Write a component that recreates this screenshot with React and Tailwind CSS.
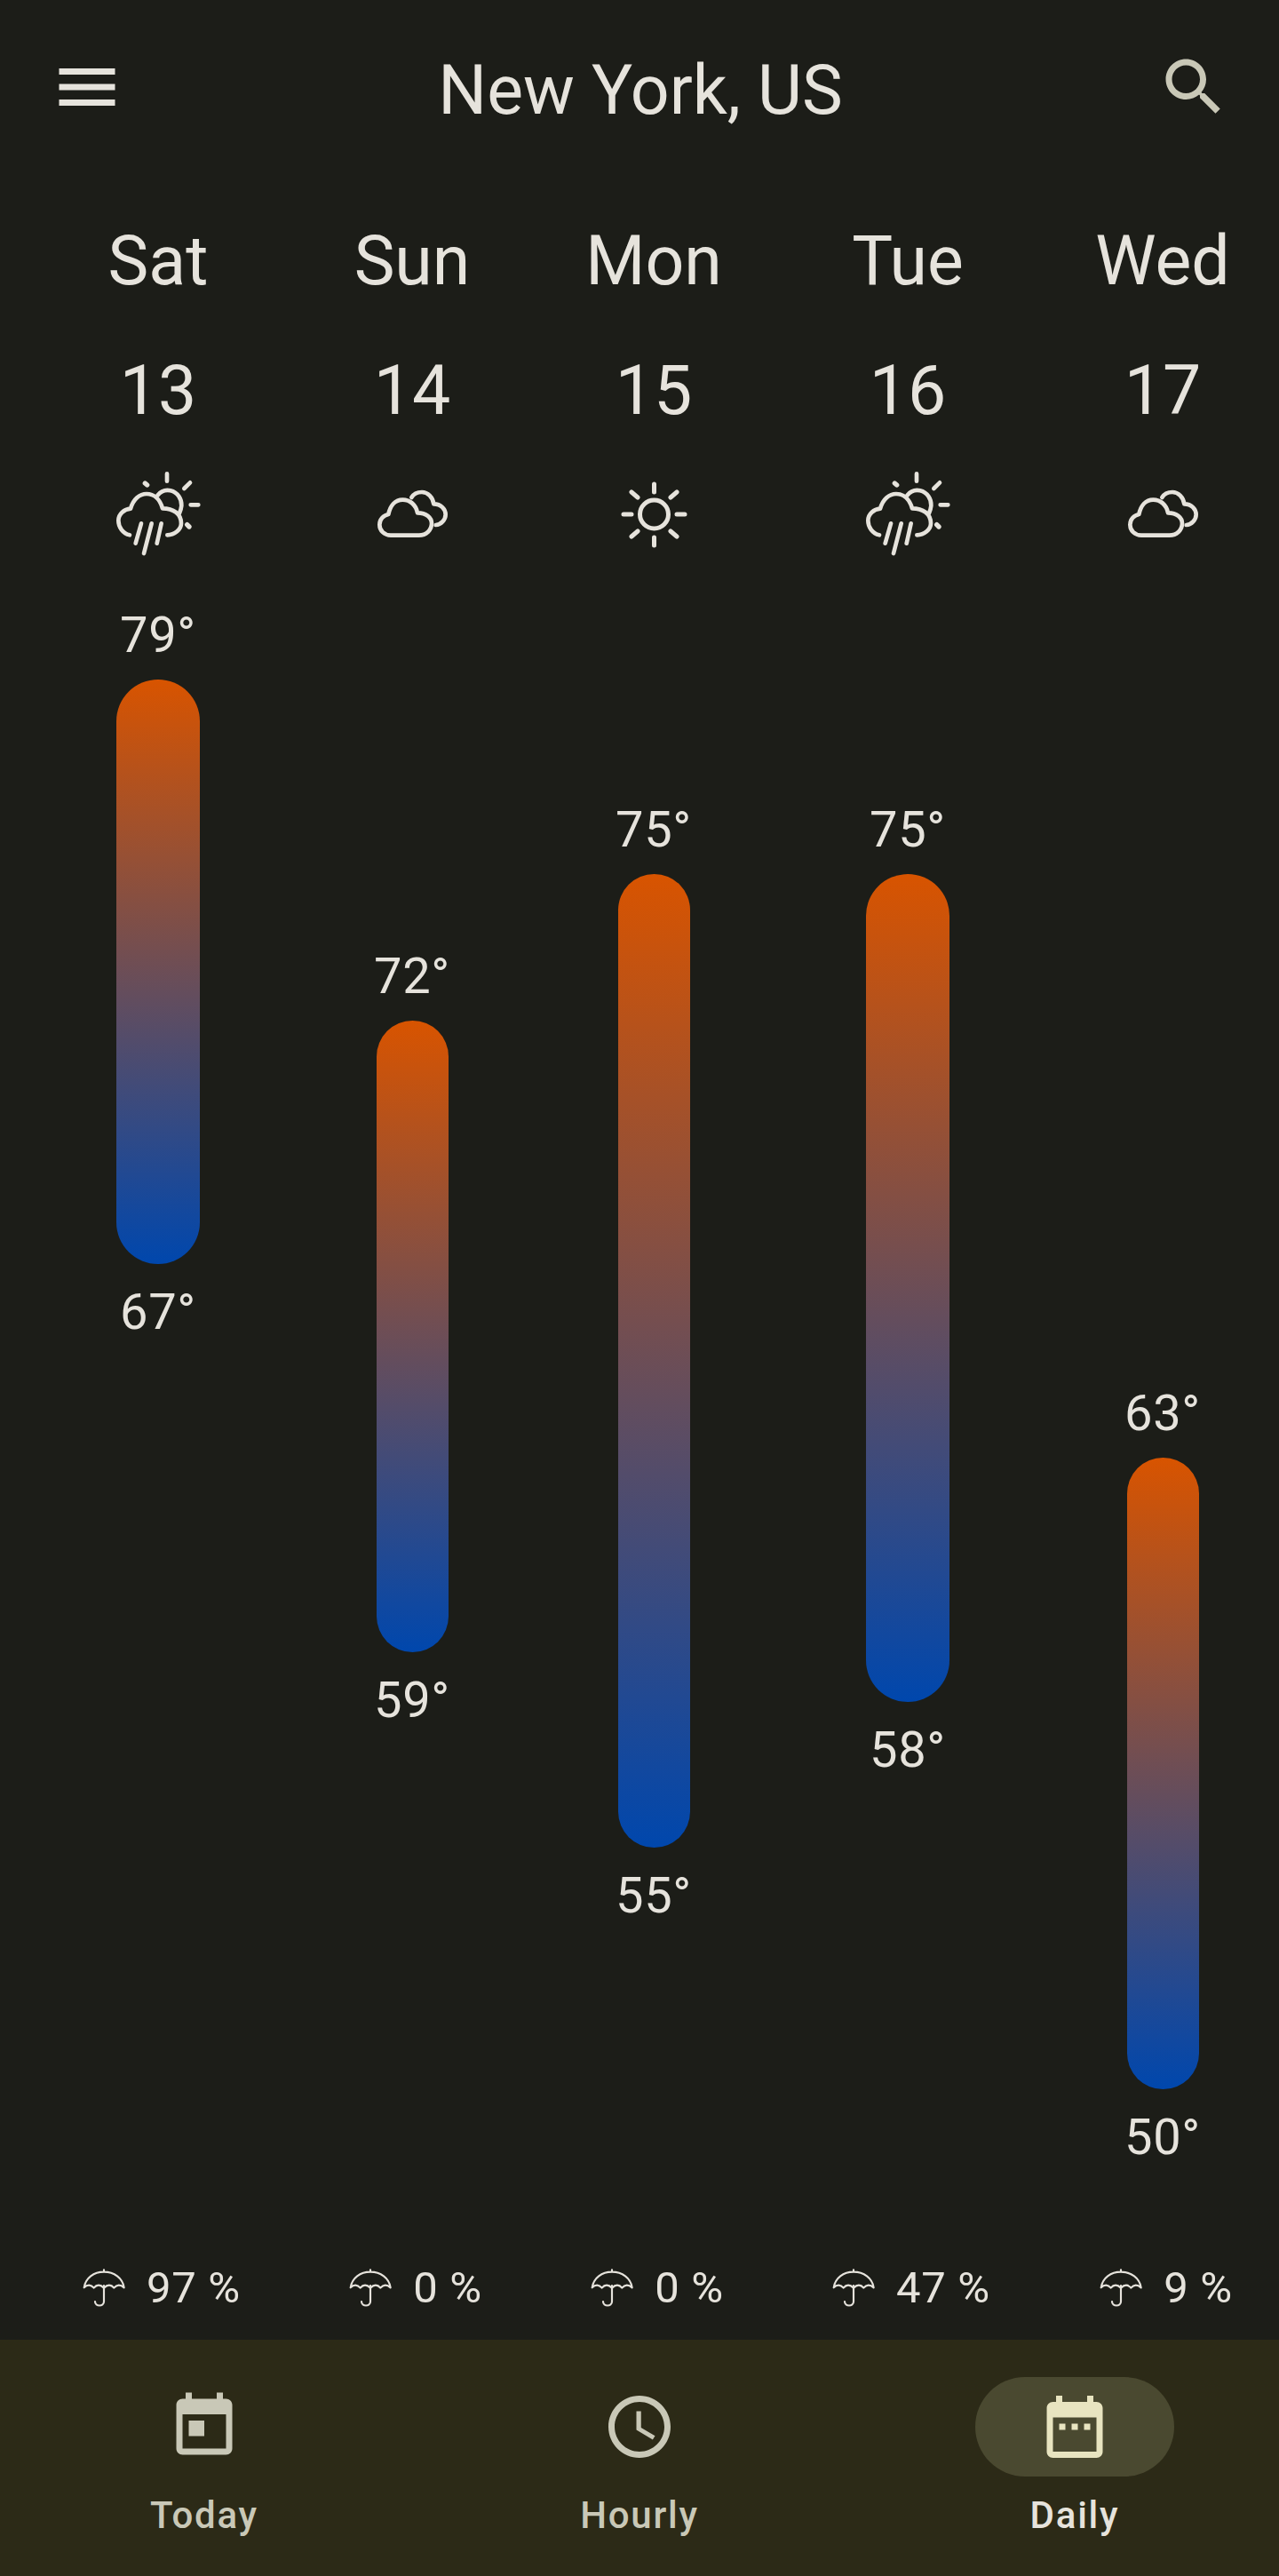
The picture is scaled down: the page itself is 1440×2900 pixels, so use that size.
const R = { fontFamily: "Roboto, sans-serif" };

function IconPath({ d, className }) {
  return (
    <svg viewBox="0 0 24 24" className={className} fill="currentColor">
      <path d={d} />
    </svg>
  );
}

const MENU = "M3 18h18v-2H3v2zm0-5h18v-2H3v2zm0-7v2h18V6H3z";
const SEARCH = "M15.5 14h-.79l-.28-.27C15.41 12.59 16 11.11 16 9.5 16 5.91 13.09 3 9.5 3S3 5.91 3 9.5 5.91 16 9.5 16c1.61 0 3.09-.59 4.23-1.57l.27.28v.79l5 4.99L20.49 19l-4.99-5zm-6 0C7.01 14 5 11.99 5 9.5S7.01 5 9.5 5 14 7.01 14 9.5 11.99 14 9.5 14z";
const TODAY = "M19 3h-1V1h-2v2H8V1H6v2H5c-1.11 0-1.99.9-1.99 2L3 19c0 1.1.89 2 2 2h14c1.1 0 2-.9 2-2V5c0-1.1-.9-2-2-2zm0 16H5V8h14v11zM7 10h5v5H7z";
const CLOCK = "M11.99 2C6.47 2 2 6.48 2 12s4.47 10 9.99 10C17.52 22 22 17.52 22 12S17.52 2 11.99 2zM12 20c-4.42 0-8-3.58-8-8s3.58-8 8-8 8 3.58 8 8-3.58 8-8 8zm.5-13H11v6l5.25 3.15.75-1.23-4.5-2.67z";
const DATE = "M9 11H7v2h2v-2zm4 0h-2v2h2v-2zm4 0h-2v2h2v-2zm2-7h-1V2h-2v2H8V2H6v2H5c-1.11 0-1.99.9-1.99 2L3 20c0 1.1.89 2 2 2h14c1.1 0 2-.9 2-2V6c0-1.1-.9-2-2-2zm0 16H5V9h14v11z";

function RainSun() {
  return (
    <svg viewBox="-6 0 480 390" className="w-[160px] h-[130px]" fill="none" stroke="#e6e3dc" strokeWidth="14" strokeLinecap="round" strokeLinejoin="round">
      <path d="M264 70V95M322 120L342 100M344 175H370" />
      <path d="M190 102L197 108M332 242L339 249" strokeWidth="16" />
      <path d="M232 143C245 127 262 124 276 127C300 133 314 155 313 178C312 188 310 195 306 203" />
      <path d="M138 277C115 272 100 250 100 228C100 205 120 190 141 188C150 155 172 138 195 138C220 138 240 155 249 187C285 187 312 205 312 238C312 258 290 277 265 277" />
      <path d="M177 238L158 305M212 238L186 339M245 238L230 305" />
    </svg>
  );
}

function Clouds() {
  return (
    <svg viewBox="-48 -60 480 390" className="w-[160px] h-[130px]" fill="none" stroke="#e6e3dc" strokeWidth="14" strokeLinecap="round" strokeLinejoin="round">
      <path d="M190 90C197 78 212 72 225 72C245 72 262 90 265 112C290 112 305 130 305 148C305 165 290 182 272 183" />
      <path d="M120 218H215C240 218 258 200 258 178C258 158 240 142 210 142C205 115 185 98 160 98C135 98 118 118 112 147C95 150 82 165 82 182C82 202 98 218 120 218Z" />
    </svg>
  );
}

function Sun() {
  return (
    <svg viewBox="0 0 160 130" className="w-[160px] h-[130px]" fill="none" stroke="#e6e3dc" strokeWidth="5" strokeLinecap="round">
      <circle cx="80.5" cy="69" r="16" />
      <path d="M80.5 35V44M80.5 95V104M106 69H115M55 69H46M99 50L106 44M99 88L106 94M62 50L55 44M62 88L55 94" />
    </svg>
  );
}

function Umbrella() {
  return (
    <svg viewBox="0 0 168 150" className="w-[56px] h-[50px] shrink-0" fill="none" stroke="#e6e3dc" strokeWidth="6.5" strokeLinecap="round" strokeLinejoin="round">
      <path d="M84 13V20M17 73C22 40 50 20 84 20C118 20 147 40 152 73C140 62 128 62 118 74C108 62 96 62 84 74C72 62 60 62 50 74C40 62 28 62 17 73Z" />
      <path d="M84 66V120C84 138 54 138 54 120" />
    </svg>
  );
}

const days = [
  { d: "Sat", n: "13", Icon: RainSun, hi: "79°", lo: "67°", rain: "97 %", bar: "w-[94px] h-[658px]", top: "mt-[0px]", col: "ml-[78px]" },
  { d: "Sun", n: "14", Icon: Clouds, hi: "72°", lo: "59°", rain: "0 %", bar: "w-[81px] h-[711px]", top: "mt-[384px]", col: "ml-[86px]" },
  { d: "Mon", n: "15", Icon: Sun, hi: "75°", lo: "55°", rain: "0 %", bar: "w-[81px] h-[1096px]", top: "mt-[219px]", col: "ml-[72px]" },
  { d: "Tue", n: "16", Icon: RainSun, hi: "75°", lo: "58°", rain: "47 %", bar: "w-[94px] h-[932px]", top: "mt-[219px]", col: "ml-[86px]" },
  { d: "Wed", n: "17", Icon: Clouds, hi: "63°", lo: "50°", rain: "9 %", bar: "w-[81px] h-[711px]", top: "mt-[876px]", col: "ml-[87px]" },
];

export default function App() {
  return (
    <div style={R} className="w-[1440px] h-[2900px] bg-[#1c1d18] flex flex-col text-[#e6e3dc] overflow-hidden">
      <header className="h-[196px] flex items-center justify-between pl-[56px] pr-[54px] shrink-0">
        <IconPath d={MENU} className="w-[84px] h-[84px]" />
        <h1 className="text-[77px] leading-[100px] font-normal mt-[8px]">New York, US</h1>
        <IconPath d={SEARCH} className="w-[84px] h-[84px] text-[#c9c8b7]" />
      </header>

      <main className="flex flex-1 items-start">
        {days.map((x) => (
          <div key={x.d} className={`w-[200px] shrink-0 flex flex-col items-center ${x.col}`}>
            <div className="text-[77px] leading-[100px] mt-[48px]">{x.d}</div>
            <div className="text-[77px] leading-[100px] mt-[46px]">{x.n}</div>
            <div className="mt-[20px]"><x.Icon /></div>
            <div className={x.top}>
              <div className="text-[56px] leading-[64px] tracking-[0.7px] text-center mt-[43px]">{x.hi}</div>
              <div className={`${x.bar} rounded-full bg-linear-to-b/srgb from-[#d85400] to-[#0047ad] mt-[18px] mx-auto`} />
              <div className="text-[56px] leading-[64px] tracking-[0.7px] text-center mt-[22px]">{x.lo}</div>
            </div>
          </div>
        ))}
      </main>

      <div className="flex h-[64px] shrink-0 mb-[26px]">
        {days.map((x) => (
          <div key={x.d} className={`w-[200px] shrink-0 flex items-center justify-center gap-[20px] pl-[4px] ${x.col}`}>
            <Umbrella />
            <span className="text-[49px] leading-[64px] tracking-[0.7px] whitespace-nowrap">{x.rain}</span>
          </div>
        ))}
      </div>

      <nav className="h-[266px] shrink-0 bg-[#2c2a17] flex justify-center">
        <div className="w-[490px] shrink-0 flex flex-col items-center pt-[42px] text-[#c9c8b7]">
          <div className="w-[224px] h-[112px] rounded-full flex items-center justify-center">
            <IconPath d={TODAY} className="w-[84px] h-[84px]" />
          </div>
          <div className="text-[42px] leading-[56px] font-medium tracking-[1.75px] mt-[16px]">Today</div>
        </div>
        <div className="w-[490px] shrink-0 flex flex-col items-center pt-[42px] text-[#c9c8b7]">
          <div className="w-[224px] h-[112px] rounded-full flex items-center justify-center">
            <IconPath d={CLOCK} className="w-[84px] h-[84px]" />
          </div>
          <div className="text-[42px] leading-[56px] font-medium tracking-[1.75px] mt-[16px]">Hourly</div>
        </div>
        <div className="w-[490px] shrink-0 flex flex-col items-center pt-[42px]">
          <div className="w-[224px] h-[112px] rounded-full bg-[#4a4930] flex items-center justify-center text-[#e8e4c0]">
            <IconPath d={DATE} className="w-[84px] h-[84px]" />
          </div>
          <div className="text-[42px] leading-[56px] font-medium tracking-[1.75px] mt-[16px] text-[#e6e3dc]">Daily</div>
        </div>
      </nav>
    </div>
  );
}
